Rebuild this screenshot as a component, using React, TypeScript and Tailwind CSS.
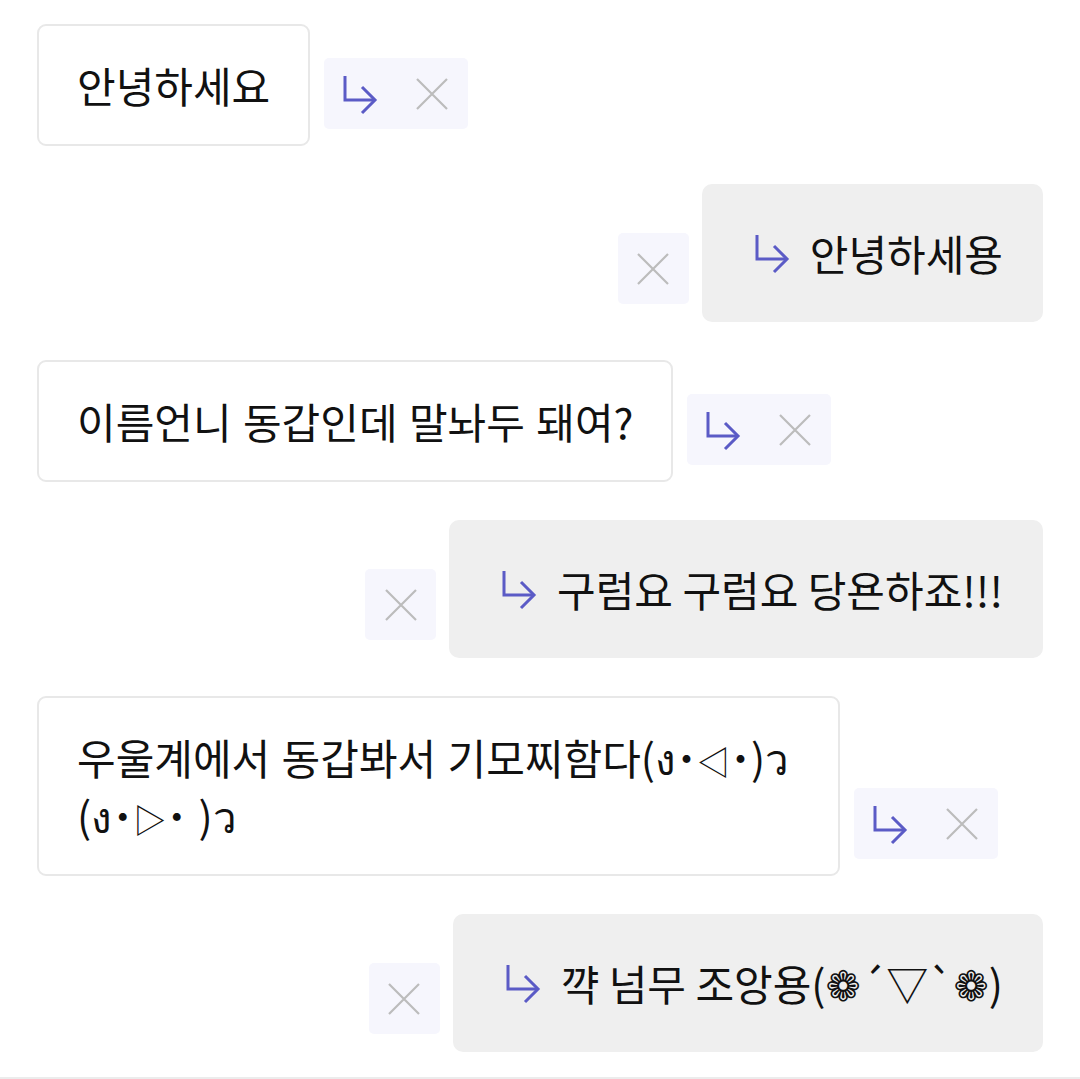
import { Fragment, type ReactNode } from 'react';

type Msg = { side: 'left' | 'right'; text: ReactNode };

const messages: Msg[] = [
  { side: 'left', text: '안녕하세요' },
  { side: 'right', text: '안녕하세용' },
  { side: 'left', text: '이름언니 동갑인데 말놔두 돼여?' },
  { side: 'right', text: '구럼요 구럼요 당욘하죠!!!' },
  {
    side: 'left',
    text: (
      <>
        우울계에서 동갑봐서 기모찌
        <span className="whitespace-nowrap">
          함다(ง˙<span className="text-[33px] leading-[0px]">◁</span>˙)ว
        </span>{' '}
        (ง˙<span className="text-[33px] leading-[0px]">▷</span>˙ )ว
      </>
    ),
  },
  { side: 'right', text: '꺅 넘무 조앙용(❁´▽`❁)' },
];

const ReplyArrow = ({ className = '' }: { className?: string }) => (
  <svg className={className} width="36" height="42" viewBox="0 0 36 42" fill="none">
    <path d="M3 3V27H33" stroke="#5b5bc6" strokeWidth="3" />
    <path d="M20 14L33 27L20 40" stroke="#5b5bc6" strokeWidth="3" />
  </svg>
);

const CloseIcon = () => (
  <svg width="32" height="32" viewBox="0 0 32 32" fill="none">
    <path d="M1 1L31 31M31 1L1 31" stroke="#bcbcbc" strokeWidth="2.2" />
  </svg>
);

export default function App() {
  return (
    <div
      className="w-[1080px] bg-white"
      style={{ fontFamily: '"Noto Sans CJK KR", "Noto Sans", "DejaVu Sans", sans-serif' }}
    >
      <div className="flex flex-col gap-[38px] px-[37px] pt-[24px] pb-[25px]">
        {messages.map((m, idx) => (
          <Fragment key={idx}>
            {m.side === 'left' ? (
              <div className="flex items-end justify-start gap-[14px]">
                <div className="max-w-[803px] rounded-[9px] border-2 border-[#e8e8e8] bg-white px-[38px] py-[30px] text-[42px] leading-[58px] text-[#111] [word-spacing:2px]">
                  {m.text}
                </div>
                {/* reply + delete */}
                <div className="mb-[17px] flex shrink-0 rounded-[5px] bg-[#f6f6fd]">
                  <button className="flex h-[71px] w-[72px] items-center justify-center">
                    <ReplyArrow />
                  </button>
                  <button className="flex h-[71px] w-[72px] items-center justify-center">
                    <CloseIcon />
                  </button>
                </div>
              </div>
            ) : (
              <div className="flex items-end justify-end gap-[13px]">
                <button className="mb-[18px] flex h-[71px] w-[71px] shrink-0 items-center justify-center rounded-[5px] bg-[#f6f6fd]">
                  <CloseIcon />
                </button>
                <div className="flex items-center rounded-[10px] bg-[#efefef] py-10 pl-[52px] pr-[40px] text-[42px] leading-[58px] text-[#111]">
                  <ReplyArrow className="mr-[20px] shrink-0" />
                  <span>{m.text}</span>
                </div>
              </div>
            )}
          </Fragment>
        ))}
      </div>
      <div className="border-t-2 border-[#ececec]" />
    </div>
  );
}
